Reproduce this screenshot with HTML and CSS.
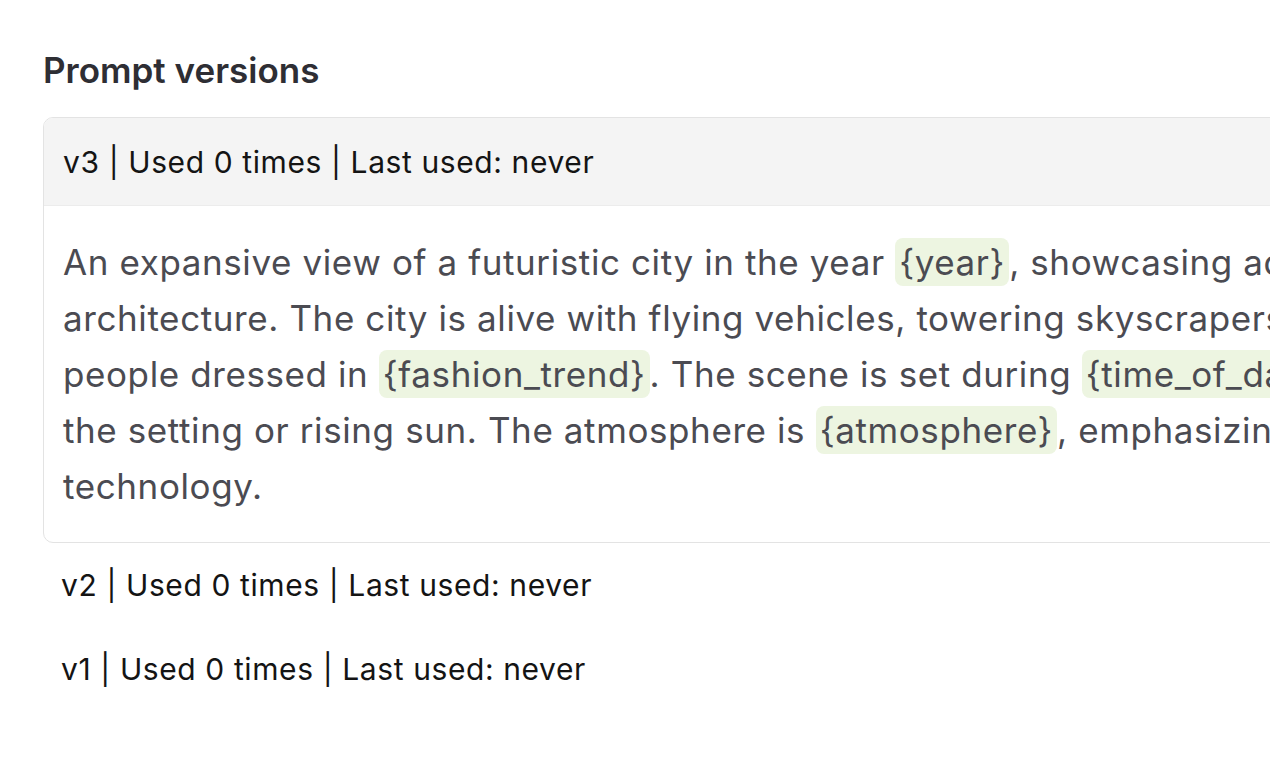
FILE: index.html
```html
<!DOCTYPE html>
<html lang="en">
<head>
<meta charset="utf-8">
<title>Prompt versions</title>
<link rel="stylesheet" href="styles.css">
</head>
<body>
<main class="page">
  <h2 class="title">Prompt versions</h2>
  <div class="versions">
    <section class="version version-open">
      <div class="version-head">v3 | Used 0 times | Last used: never</div>
      <div class="version-body">
        <p class="prompt">An expansive view of a futuristic city in the year <span class="var">{year}</span>, showcasing advanced<br>architecture. The city is alive with flying vehicles, towering skyscrapers, and bustling streets filled with<br>people dressed in <span class="var">{fashion_trend}</span>. The scene is set during <span class="var">{time_of_day}</span>, with the sky illuminated by<br>the setting or rising sun. The atmosphere is <span class="var">{atmosphere}</span>, emphasizing the harmony between nature and<br>technology.</p>
      </div>
    </section>
    <section class="version">
      <div class="version-head">v2 | Used 0 times | Last used: never</div>
    </section>
    <section class="version">
      <div class="version-head">v1 | Used 0 times | Last used: never</div>
    </section>
  </div>
</main>
</body>
</html>
```

FILE: styles.css
```css
html, body {
  margin: 0;
  padding: 0;
  background: #ffffff;
  overflow: hidden;
}

body {
  width: 1270px;
  height: 760px;
  font-family: Inter, "Noto Sans", "DejaVu Sans", sans-serif;
}

.page {
  padding: 50px 0 0 43px;
  width: 1900px;
}

.title {
  margin: 0 0 26px 0;
  font-size: 35px;
  line-height: 41px;
  font-weight: 600;
  color: #2e2e34;
  letter-spacing: 0;
}

.versions {
  display: flex;
  flex-direction: column;
}

.version-head {
  height: 84px;
  display: flex;
  align-items: center;
  padding-left: 18px;
  font-size: 30px;
  color: #141414;
  letter-spacing: 0.6px;
  white-space: nowrap;
}

.version-open {
  border: 1px solid #e3e3e3;
  border-radius: 10px;
  overflow: hidden;
}

.version-open .version-head {
  height: 87px;
  padding-left: 19px;
  background: #f4f4f4;
  border-bottom: 1px solid #ececec;
}

.version-body {
  padding: 28px 19px 28px 19px;
}

.prompt {
  margin: 0;
  font-size: 35px;
  line-height: 56px;
  color: #4b4b52;
  white-space: nowrap;
  letter-spacing: 0.6px;
}

.var {
  background: #edf5e1;
  border-radius: 8px;
  padding: 3px 4px;
}
```
